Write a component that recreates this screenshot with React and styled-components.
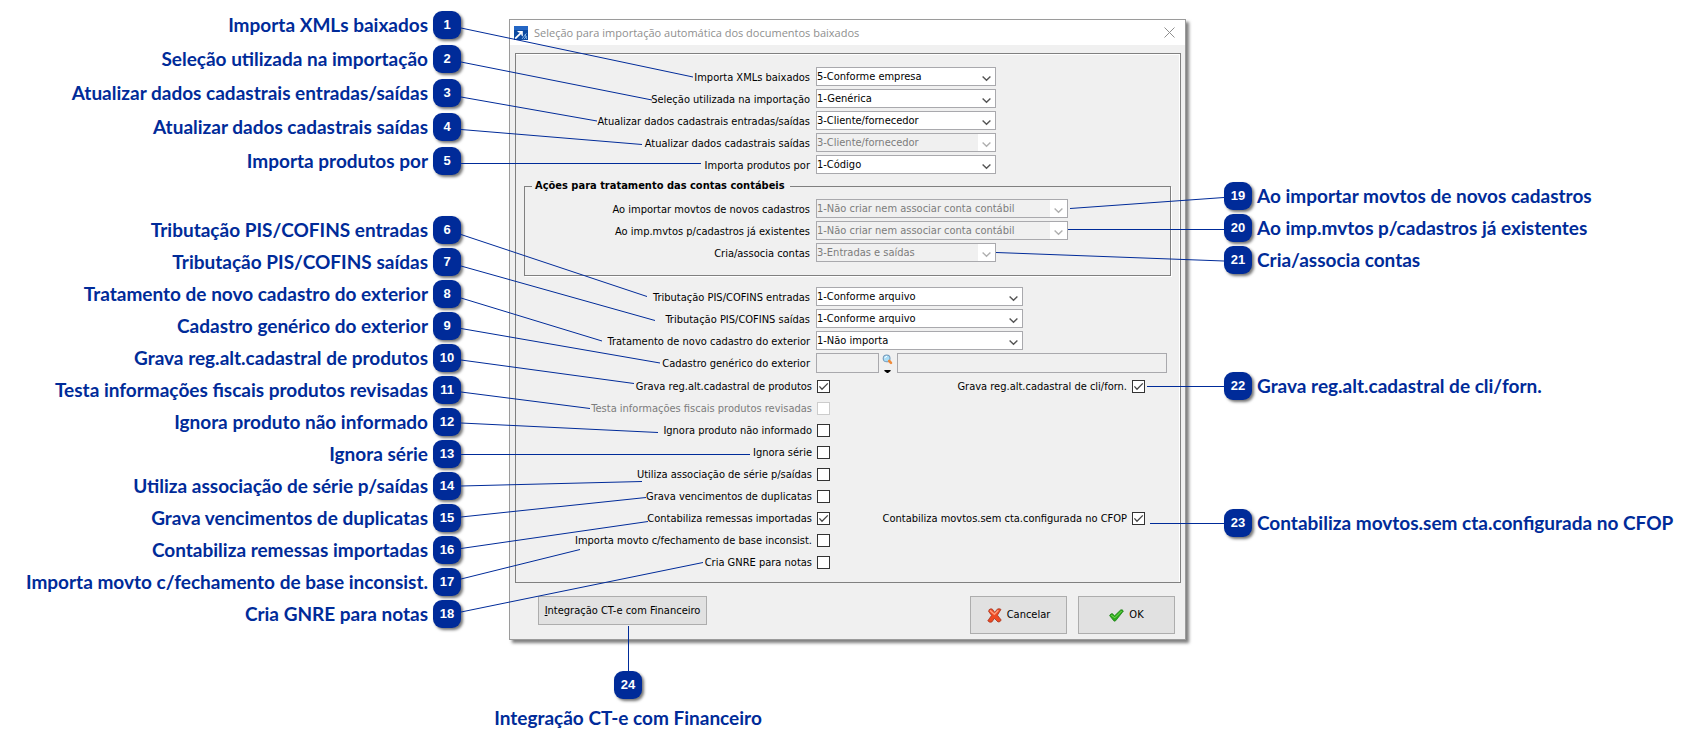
import React, { useId } from "react";
import styled, { createGlobalStyle } from "styled-components";

const navy = "#002b99";

const GlobalStyle = createGlobalStyle`
  * { box-sizing: border-box; }
  body { margin: 0; background: #fff; }
`;

const Page = styled.main`
  display: grid;
  grid-template-columns: minmax(max-content, 1fr) 677px minmax(max-content, 1fr);
  font-family: Lato, "Liberation Sans", sans-serif;
`;

/* ---------- callouts ---------- */

const Side = styled.div`
  display: flex;
  flex-direction: column;
  padding: ${(p) => (p.$side === "left" ? "11px 48px 0 8px" : "182px 8px 0 38px")};
`;

const CalloutList = styled.ol`
  list-style: none;
  margin: ${(p) => p.$before || 0}px 0 0;
  padding: 0;
  display: flex;
  flex-direction: column;
  gap: ${(p) => p.$gap || 4}px;
`;

const CalloutItem = styled.li`
  display: flex;
  flex-direction: ${(p) => (p.$side === "left" ? "row-reverse" : "row")};
  align-items: center;
  gap: 5px;
`;

const Badge = styled.span`
  flex: none;
  width: 28px;
  height: 28px;
  border-radius: 9px;
  background: ${navy};
  color: #fff;
  box-shadow: 2px 2px 3px rgba(0, 0, 0, 0.55);
  font: bold 13px/28px "Liberation Sans", Arial, sans-serif;
  text-align: center;
`;

const Caption = styled.span`
  color: ${navy};
  font-size: 19px;
  font-weight: 700;
  line-height: 24px;
  white-space: nowrap;
`;

const BottomCallout = styled.div`
  width: 238px;
  margin-top: 31px;
  padding-bottom: 16px;
  display: flex;
  flex-direction: column;
  align-items: center;
  gap: 7px;
`;

/* ---------- dialog ---------- */

const Center = styled.div`
  position: relative;
  padding-top: 19px;
`;

const Dialog = styled.section`
  background: #f0f0f0;
  border: 1px solid #9b9b9b;
  box-shadow: 3px 3px 3px rgba(0, 0, 0, 0.5);
  color: #000;
  font-family: "DejaVu Sans Condensed", "DejaVu Sans", sans-serif;
  font-size: 11px;
  line-height: 14px;
`;

const TitleBar = styled.header`
  display: flex;
  align-items: center;
  gap: 6px;
  height: 25px;
  padding: 0 10px 0 4px;
  background: #fff;
`;

const Title = styled.h1`
  flex: 1;
  margin: 0;
  color: #8f8f8f;
  font: 400 11px/18px "Open Sans", sans-serif;
`;

const CloseButton = styled.button`
  display: flex;
  padding: 0;
  border: 0;
  background: none;
`;

const Panel = styled.div`
  margin: 8px 4px 0 5px;
  padding: 13px 0 10px;
  border: 1px solid #808080;
  box-shadow: inset -1px 1px 0 #fff;
`;

const Rows = styled.div`
  display: flex;
  flex-direction: column;
  gap: 3px;
  margin-top: ${(p) => p.$before || 0}px;
`;

const Row = styled.div`
  display: flex;
  align-items: center;
  height: ${(p) => p.$height || 19}px;
`;

const FieldLabel = styled.label`
  width: ${(p) => (p.$inset ? 285 : 294)}px;
  margin-right: 6px;
  padding-top: 2px;
  text-align: right;
  white-space: nowrap;
`;

const SelectFrame = styled.span`
  position: relative;
  display: flex;
  width: ${(p) => p.$width}px;
  height: 19px;
`;

const SelectBox = styled.select`
  appearance: none;
  width: 100%;
  margin: 0;
  padding: 0 18px 0 0;
  border: 1px solid #a9a9ad;
  border-radius: 0;
  background: #fff;
  color: #000;
  font: inherit;
  opacity: 1;
  &:disabled {
    background: linear-gradient(to left, #fff 17px, #f0f0f0 17px);
    color: #7c7c7c;
  }
`;

const Chevron = styled.svg`
  position: absolute;
  right: 5px;
  top: 8px;
  pointer-events: none;
`;

const AccountsGroup = styled.fieldset`
  margin: 5px 9px 0 8px;
  padding: 6px 0 13px;
  border: 1px solid #808080;
  box-shadow: 1px 1px 0 #fff;
`;

const AccountsLegend = styled.legend`
  margin-left: 7px;
  padding: 0 5px 0 3px;
  background: #f0f0f0;
  font-weight: 700;
`;

const TextInput = styled.input`
  width: ${(p) => p.$width}px;
  height: 20px;
  padding: 0 2px;
  border: 1px solid #a9a9ad;
  border-radius: 0;
  background: #f0f0f0;
  font: inherit;
`;

const LookupButton = styled.button`
  display: flex;
  width: 18px;
  padding: 0 0 0 3px;
  border: 0;
  background: none;
`;

const TickRow = styled.div`
  display: grid;
  grid-template-columns: 314px 315px;
  align-items: center;
  height: 19px;
`;

const TickLabel = styled.label`
  display: flex;
  justify-content: flex-end;
  align-items: center;
  gap: 5px;
  color: ${(p) => (p.$muted ? "#7c7c7c" : "#000")};
  white-space: nowrap;
`;

const TickFrame = styled.span`
  position: relative;
  display: flex;
  svg { display: none; }
  input:checked + svg { display: block; }
`;

const TickInput = styled.input`
  appearance: none;
  width: 13px;
  height: 13px;
  margin: 0;
  border: 1px solid #333;
  background: #fff;
  &:disabled { border-color: #ccc; }
`;

const TickMark = styled.svg`
  position: absolute;
  left: 0;
  top: 0;
  pointer-events: none;
`;

const Actions = styled.footer`
  display: flex;
  align-items: flex-start;
  gap: 11px;
  padding: 13px 10px 5px 28px;
`;

const ActionButton = styled.button`
  display: flex;
  align-items: center;
  justify-content: center;
  gap: 5px;
  width: ${(p) => (p.$wide ? 169 : 97)}px;
  height: ${(p) => (p.$wide ? 29 : 38)}px;
  margin: 0 ${(p) => (p.$wide ? "auto" : "0")} 0 0;
  padding: 0;
  border: 1px solid #adadad;
  background: #e1e1e1;
  color: #000;
  font: inherit;
  white-space: nowrap;
`;

const Connectors = styled.svg`
  position: absolute;
  left: 0;
  top: 0;
  overflow: visible;
  pointer-events: none;
`;

/* ---------- data ---------- */

const leftTop = [
  [1, "Importa XMLs baixados"],
  [2, "Seleção utilizada na importação"],
  [3, "Atualizar dados cadastrais entradas/saídas"],
  [4, "Atualizar dados cadastrais saídas"],
  [5, "Importa produtos por"],
];
const leftBottom = [
  [6, "Tributação PIS/COFINS entradas"],
  [7, "Tributação PIS/COFINS saídas"],
  [8, "Tratamento de novo cadastro do exterior"],
  [9, "Cadastro genérico do exterior"],
  [10, "Grava reg.alt.cadastral de produtos"],
  [11, "Testa informações fiscais produtos revisadas"],
  [12, "Ignora produto não informado"],
  [13, "Ignora série"],
  [14, "Utiliza associação de série p/saídas"],
  [15, "Grava vencimentos de duplicatas"],
  [16, "Contabiliza remessas importadas"],
  [17, "Importa movto c/fechamento de base inconsist."],
  [18, "Cria GNRE para notas"],
];
const rightAccounts = [
  [19, "Ao importar movtos de novos cadastros"],
  [20, "Ao imp.mvtos p/cadastros já existentes"],
  [21, "Cria/associa contas"],
];

// Callout lines: x1, y1, x2, y2
const lines = [
  [461, 28, 693, 77],
  [461, 62, 652, 100],
  [461, 97, 597, 121],
  [461, 129.5, 642, 144.5],
  [461, 163.5, 701, 163.5],
  [461, 234.5, 647, 296.5],
  [461, 266, 655, 320.5],
  [461, 298, 602, 341],
  [461, 328.5, 660, 363],
  [461, 360, 634, 383.5],
  [461, 392, 590, 408.5],
  [461, 423, 658, 432.5],
  [461, 454.5, 750, 454.5],
  [461, 486, 642, 481.5],
  [461, 517, 646, 497.5],
  [461, 548.5, 648, 521.5],
  [461, 579, 580, 549.5],
  [461, 612, 703, 562.5],
  [1070, 208.5, 1224, 197.5],
  [1068, 229.5, 1224, 229.5],
  [996, 252.5, 1224, 261],
  [1147, 386.5, 1224, 386.5],
  [1150, 523.5, 1224, 523.5],
  [628.5, 626, 628.5, 671],
];

/* ---------- parts ---------- */

function Callouts({ items, side, before, gap }) {
  return (
    <CalloutList $before={before} $gap={gap} start={items[0][0]}>
      {items.map(([n, text]) => (
        <CalloutItem key={n} $side={side}>
          <Badge>{n}</Badge>
          <Caption>{text}</Caption>
        </CalloutItem>
      ))}
    </CalloutList>
  );
}

function SelectField({ label, value, width = 180, disabled, inset }) {
  const id = useId();
  return (
    <Row>
      <FieldLabel htmlFor={id} $inset={inset}>{label}</FieldLabel>
      <SelectFrame $width={width}>
        <SelectBox id={id} disabled={disabled} defaultValue={value}>
          <option>{value}</option>
        </SelectBox>
        <Chevron width="9" height="7" viewBox="0 0 9 7" aria-hidden="true">
          <path d="M.6 1.4 4.5 5.2 8.4 1.4" fill="none" stroke={disabled ? "#b0b0b0" : "#555"} strokeWidth="1.4" />
        </Chevron>
      </SelectFrame>
    </Row>
  );
}

function Tick({ label, checked, disabled }) {
  return (
    <TickLabel $muted={disabled}>
      {label}
      <TickFrame>
        <TickInput type="checkbox" defaultChecked={checked} disabled={disabled} />
        <TickMark width="13" height="13" viewBox="0 0 13 13" aria-hidden="true">
          <path d="M2.4 6.4 5 9.2 10.8 3.4" fill="none" stroke="#444" strokeWidth="1.3" />
        </TickMark>
      </TickFrame>
    </TickLabel>
  );
}

const AppIcon = () => (
  <svg width="14" height="14" viewBox="0 0 14 14" aria-hidden="true">
    <rect width="14" height="14" fill="#0d4aa0" />
    <rect width="14" height="4" fill="#2466c4" />
    <path d="M1.2 12.6 7 6.9" stroke="#fff" strokeWidth="1.8" />
    <path d="M3 5H8.8V10.6L7.4 9.2 7 7 4.6 6.4Z" fill="#fff" />
    <path d="M8 13 12.4 7.4M10 13.2 12.6 10M11.2 8 12.6 13" stroke="#8fc0ee" strokeWidth=".9" />
  </svg>
);

const SearchIcon = () => (
  <svg width="12" height="20" viewBox="0 0 12 20" aria-hidden="true">
    <circle cx="4.6" cy="5.4" r="3.4" fill="#a8ddf7" stroke="#7398b8" strokeWidth="1.1" />
    <path d="M2.8 5.2Q3.2 3.4 5 3.4" stroke="#fff" fill="none" />
    <path d="M7.2 8 9 9.8" stroke="#ef8b3a" strokeWidth="2.6" strokeLinecap="round" />
    <path d="M2.4 17H8.6V18L5.5 20.4 2.4 18Z" fill="#000" />
  </svg>
);

const CrossIcon = () => (
  <svg width="15" height="15" viewBox="0 0 15 15" aria-hidden="true">
    <path d="M2.2 1.6Q4 .2 5.4 1.2L7.8 4.4 10.2 1.2Q12 0 14 1.4L10.4 7.2 14.2 12Q13.4 14.2 11 14L7.4 10.4 4.8 14Q2.6 15 .8 12.8L4.6 7.4 1.6 3.4Z" fill="#ee4a23" stroke="#a5351f" strokeWidth=".8" />
    <path d="M3 2.4 7.4 6.2 11.4 2.2" stroke="#ff9a78" strokeWidth="1.4" fill="none" />
  </svg>
);

const OkIcon = () => (
  <svg width="15" height="13" viewBox="0 0 15 13" aria-hidden="true">
    <path d="M.6 6.6Q1.6 4.6 3.2 4.6L5.6 6.8 11.6 1Q13.4.2 14.4 2L6.6 11.8Q5.6 12.6 4.8 11.8Z" fill="#2cab1c" stroke="#1b7d14" strokeWidth=".8" />
    <path d="M2.2 6.2 5.8 8.8 12.6 2" stroke="#7bdc58" strokeWidth="1" fill="none" />
  </svg>
);

export default function App() {
  const lookupId = useId();
  return (
    <>
      <GlobalStyle />
      <Page>
        <Side $side="left">
          <Callouts items={leftTop} side="left" gap={6} />
          <Callouts items={leftBottom} side="left" before={41} />
        </Side>

        <Center>
          <Dialog aria-labelledby="dialog-title">
            <TitleBar>
              <AppIcon />
              <Title id="dialog-title">Seleção para importação automática dos documentos baixados</Title>
              <CloseButton type="button" aria-label="Fechar">
                <svg width="11" height="11" viewBox="0 0 11 11" aria-hidden="true">
                  <path d="M.5.5 10.5 10.5M10.5.5.5 10.5" stroke="#8f8f8f" strokeWidth="1" />
                </svg>
              </CloseButton>
            </TitleBar>

            <Panel>
              <Rows>
                <SelectField label="Importa XMLs baixados" value="5-Conforme empresa" />
                <SelectField label="Seleção utilizada na importação" value="1-Genérica" />
                <SelectField label="Atualizar dados cadastrais entradas/saídas" value="3-Cliente/fornecedor" />
                <SelectField label="Atualizar dados cadastrais saídas" value="3-Cliente/fornecedor" disabled />
                <SelectField label="Importa produtos por" value="1-Código" />
              </Rows>

              <AccountsGroup>
                <AccountsLegend>Ações para tratamento das contas contábeis</AccountsLegend>
                <Rows>
                  <SelectField inset width={252} label="Ao importar movtos de novos cadastros" value="1-Não criar nem associar conta contábil" disabled />
                  <SelectField inset width={252} label="Ao imp.mvtos p/cadastros já existentes" value="1-Não criar nem associar conta contábil" disabled />
                  <SelectField inset label="Cria/associa contas" value="3-Entradas e saídas" disabled />
                </Rows>
              </AccountsGroup>

              <Rows $before={11}>
                <SelectField width={207} label="Tributação PIS/COFINS entradas" value="1-Conforme arquivo" />
                <SelectField width={207} label="Tributação PIS/COFINS saídas" value="1-Conforme arquivo" />
                <SelectField width={207} label="Tratamento de novo cadastro do exterior" value="1-Não importa" />
                <Row $height={20}>
                  <FieldLabel htmlFor={lookupId}>Cadastro genérico do exterior</FieldLabel>
                  <TextInput id={lookupId} $width={63} readOnly />
                  <LookupButton type="button" aria-label="Pesquisar cadastro">
                    <SearchIcon />
                  </LookupButton>
                  <TextInput aria-label="Nome do cadastro" $width={270} readOnly />
                </Row>
              </Rows>

              <Rows $before={4}>
                <TickRow>
                  <Tick label="Grava reg.alt.cadastral de produtos" checked />
                  <Tick label="Grava reg.alt.cadastral de cli/forn." checked />
                </TickRow>
                <TickRow><Tick label="Testa informações fiscais produtos revisadas" disabled /></TickRow>
                <TickRow><Tick label="Ignora produto não informado" /></TickRow>
                <TickRow><Tick label="Ignora série" /></TickRow>
                <TickRow><Tick label="Utiliza associação de série p/saídas" /></TickRow>
                <TickRow><Tick label="Grava vencimentos de duplicatas" /></TickRow>
                <TickRow>
                  <Tick label="Contabiliza remessas importadas" checked />
                  <Tick label="Contabiliza movtos.sem cta.configurada no CFOP" checked />
                </TickRow>
                <TickRow><Tick label="Importa movto c/fechamento de base inconsist." /></TickRow>
                <TickRow><Tick label="Cria GNRE para notas" /></TickRow>
              </Rows>
            </Panel>

            <Actions>
              <ActionButton type="button" $wide><span><u>I</u>ntegração CT-e com Financeiro</span></ActionButton>
              <ActionButton type="button"><CrossIcon />Cancelar</ActionButton>
              <ActionButton type="button"><OkIcon />OK</ActionButton>
            </Actions>
          </Dialog>

          <BottomCallout>
            <Badge>24</Badge>
            <Caption>Integração CT-e com Financeiro</Caption>
          </BottomCallout>

          <Connectors width="677" height="700" viewBox="509 0 677 700" aria-hidden="true">
            {lines.map(([x1, y1, x2, y2]) => (
              <line key={`${x1}-${y1}`} x1={x1} y1={y1} x2={x2} y2={y2} stroke={navy} strokeWidth="1" />
            ))}
          </Connectors>
        </Center>

        <Side $side="right">
          <Callouts items={rightAccounts} side="right" />
          <Callouts items={[[22, "Grava reg.alt.cadastral de cli/forn."]]} side="right" before={98} />
          <Callouts items={[[23, "Contabiliza movtos.sem cta.configurada no CFOP"]]} side="right" before={109} />
        </Side>
      </Page>
    </>
  );
}
